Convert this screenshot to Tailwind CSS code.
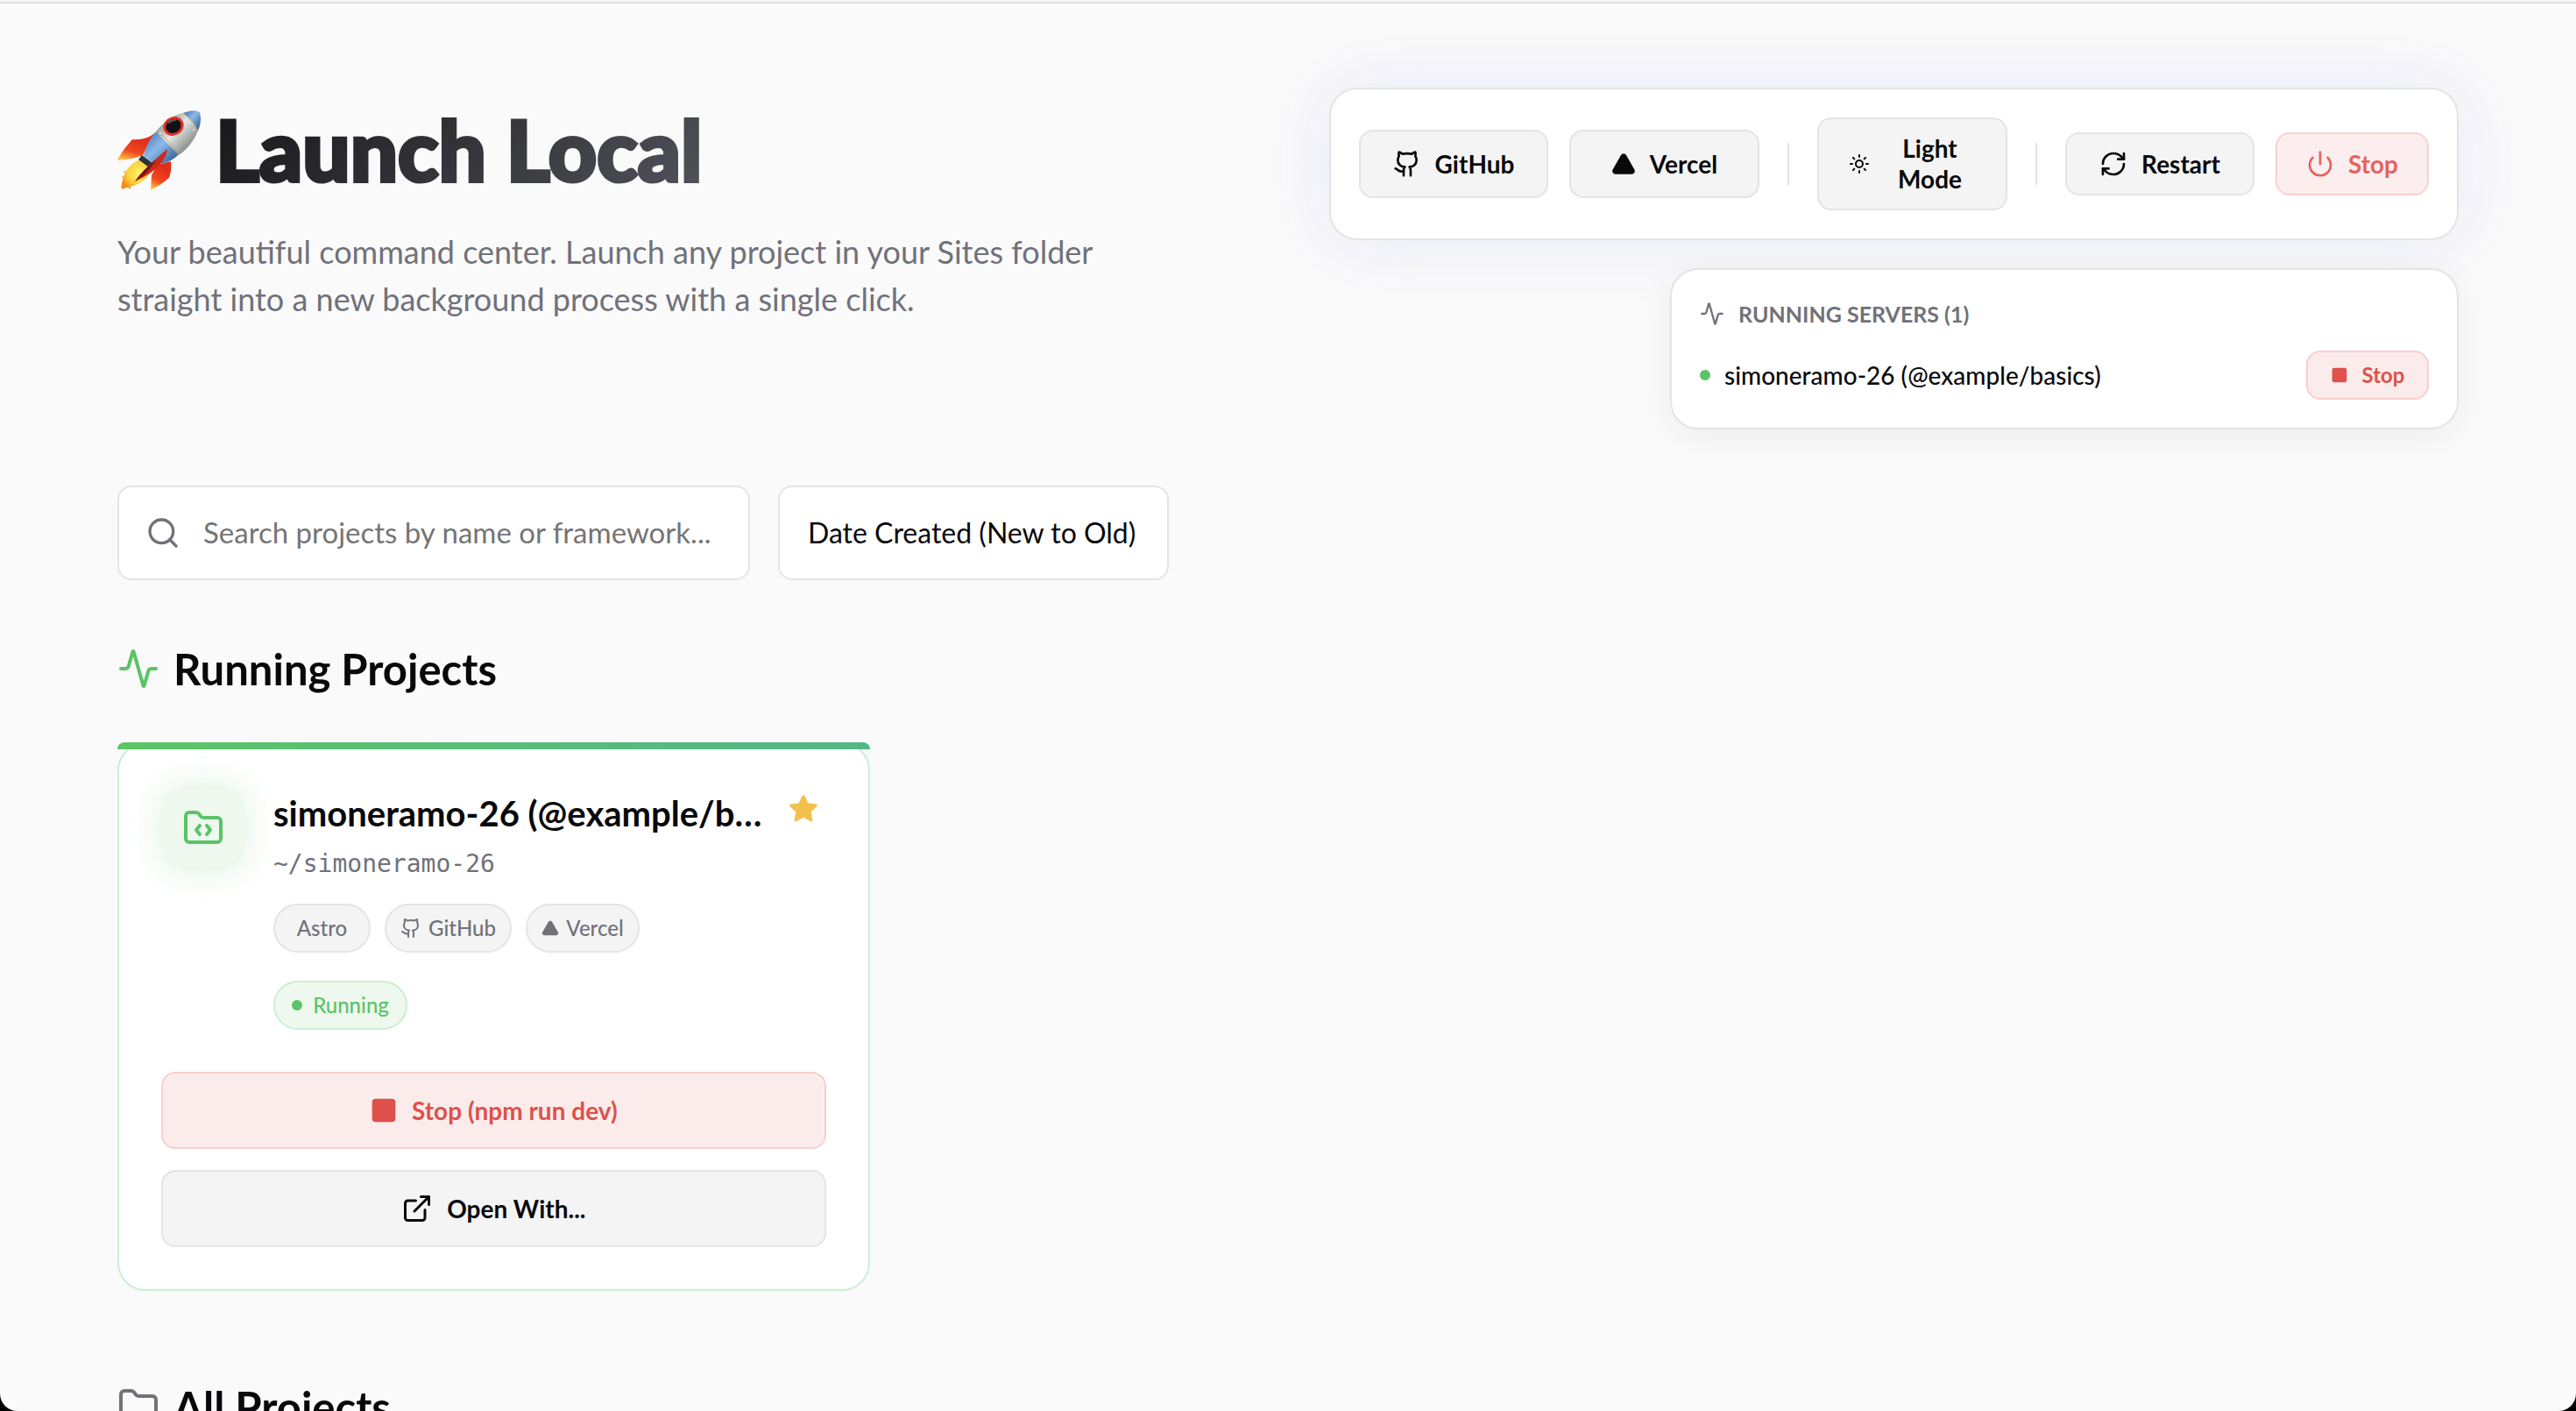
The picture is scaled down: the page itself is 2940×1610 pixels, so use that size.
<!DOCTYPE html>
<html lang="en">
<head>
    <meta charset="UTF-8">
    <meta name="viewport" content="width=device-width, initial-scale=1.0">
    <title>Launch Local</title>
    <script src="https://cdn.jsdelivr.net/npm/@tailwindcss/browser@4"></script>
</head>
<body class="bg-black font-['Lato','Noto_Sans',sans-serif] text-[#09090b]">

<!-- Icon sprites -->
<svg class="hidden" aria-hidden="true">
    <symbol id="i-github" viewBox="0 0 24 24" fill="none" stroke="currentColor" stroke-width="2" stroke-linecap="round" stroke-linejoin="round">
        <path d="M15 22v-4a4.8 4.8 0 0 0-1-3.5c3 0 6-2 6-5.5.08-1.25-.27-2.48-1-3.5.28-1.15.28-2.35 0-3.5 0 0-1 0-3 1.5-2.64-.5-5.36-.5-8 0C6 2 5 2 5 2c-.3 1.15-.3 2.35 0 3.5A5.403 5.403 0 0 0 4 9c0 3.5 3 5.5 6 5.5-.39.49-.68 1.05-.85 1.65-.17.6-.22 1.23-.15 1.85v4"/>
        <path d="M9 18c-4.51 2-5-2-7-2"/>
    </symbol>
    <symbol id="i-triangle" viewBox="0 0 24 24" fill="currentColor" stroke="currentColor" stroke-width="2" stroke-linecap="round" stroke-linejoin="round">
        <path d="M13.73 4a2 2 0 0 0-3.46 0l-8 14A2 2 0 0 0 4 21h16a2 2 0 0 0 1.73-3Z"/>
    </symbol>
    <symbol id="i-sun" viewBox="0 0 24 24" fill="none" stroke="currentColor" stroke-width="2" stroke-linecap="round" stroke-linejoin="round">
        <circle cx="12" cy="12" r="4"/>
        <path d="M12 2v2M12 20v2M4.93 4.93l1.41 1.41M17.66 17.66l1.41 1.41M2 12h2M20 12h2M6.34 17.66l-1.41 1.41M19.07 4.93l-1.41 1.41"/>
    </symbol>
    <symbol id="i-refresh" viewBox="0 0 24 24" fill="none" stroke="currentColor" stroke-width="2" stroke-linecap="round" stroke-linejoin="round">
        <path d="M3 12a9 9 0 0 1 9-9 9.75 9.75 0 0 1 6.74 2.74L21 8"/>
        <path d="M21 3v5h-5"/>
        <path d="M21 12a9 9 0 0 1-9 9 9.75 9.75 0 0 1-6.74-2.74L3 16"/>
        <path d="M8 16H3v5"/>
    </symbol>
    <symbol id="i-power" viewBox="0 0 24 24" fill="none" stroke="currentColor" stroke-width="2" stroke-linecap="round" stroke-linejoin="round">
        <path d="M12 2v10"/>
        <path d="M18.4 6.6a9 9 0 1 1-12.77.04"/>
    </symbol>
    <symbol id="i-activity" viewBox="0 0 24 24" fill="none" stroke="currentColor" stroke-width="2" stroke-linecap="round" stroke-linejoin="round">
        <path d="M22 12h-2.48a2 2 0 0 0-1.93 1.46l-2.35 8.36a.25.25 0 0 1-.48 0L9.24 2.18a.25.25 0 0 0-.48 0l-2.35 8.36A2 2 0 0 1 4.49 12H2"/>
    </symbol>
    <symbol id="i-square" viewBox="0 0 24 24" fill="currentColor" stroke="currentColor" stroke-width="2">
        <rect x="3" y="3" width="18" height="18" rx="2"/>
    </symbol>
    <symbol id="i-search" viewBox="0 0 24 24" fill="none" stroke="currentColor" stroke-width="2" stroke-linecap="round" stroke-linejoin="round">
        <circle cx="11" cy="11" r="8"/>
        <path d="m21 21-4.34-4.34"/>
    </symbol>
    <symbol id="i-folder" viewBox="0 0 24 24" fill="none" stroke="currentColor" stroke-width="2" stroke-linecap="round" stroke-linejoin="round">
        <path d="M20 20a2 2 0 0 0 2-2V8a2 2 0 0 0-2-2h-7.9a2 2 0 0 1-1.69-.9L9.6 3.9A2 2 0 0 0 7.93 3H4a2 2 0 0 0-2 2v13a2 2 0 0 0 2 2Z"/>
    </symbol>
    <symbol id="i-folder-code" viewBox="0 0 24 24" fill="none" stroke="currentColor" stroke-width="2" stroke-linecap="round" stroke-linejoin="round">
        <path d="M10 10.5 8 13l2 2.5"/>
        <path d="m14 10.5 2 2.5-2 2.5"/>
        <path d="M20 20a2 2 0 0 0 2-2V8a2 2 0 0 0-2-2h-7.9a2 2 0 0 1-1.69-.9L9.6 3.9A2 2 0 0 0 7.93 3H4a2 2 0 0 0-2 2v13a2 2 0 0 0 2 2Z"/>
    </symbol>
    <symbol id="i-star" viewBox="0 0 24 24" fill="currentColor" stroke="currentColor" stroke-width="2" stroke-linecap="round" stroke-linejoin="round">
        <path d="M12 2.5l2.9 6 6.6.9-4.8 4.6 1.2 6.6L12 17.5l-5.9 3.1 1.2-6.600L2.5 9.4l6.600-.9Z"/>
    </symbol>
    <symbol id="i-external" viewBox="0 0 24 24" fill="none" stroke="currentColor" stroke-width="2" stroke-linecap="round" stroke-linejoin="round">
        <path d="M15 3h6v6"/>
        <path d="M10 14 21 3"/>
        <path d="M18 13v6a2 2 0 0 1-2 2H5a2 2 0 0 1-2-2V8a2 2 0 0 1 2-2h6"/>
    </symbol>
</svg>

<div class="h-screen overflow-hidden rounded-b-[20px] bg-[#fafafa]">
<div class="h-1 border-b-2 border-[#e0dfe0] bg-[#faf5f7]"></div>
<div class="px-[134px] pt-24">

    <header class="flex items-start justify-between gap-12">
        <div class="max-w-[1200px] flex-1 pt-5">
            <h1 class="flex h-[104px] items-center gap-4 text-[96px] leading-[100px] font-black">
                <svg class="h-24 w-24" viewBox="0 0 96 92" aria-hidden="true">
                    <defs>
                        <linearGradient id="hull" x1="0" y1="0" x2="1" y2="1">
                            <stop offset="0.15" stop-color="#8f9694"/>
                            <stop offset="0.45" stop-color="#e3e6e2"/>
                            <stop offset="0.9" stop-color="#6d7270"/>
                        </linearGradient>
                        <linearGradient id="blue" x1="0" y1="0" x2="1" y2="1">
                            <stop offset="0" stop-color="#3c6cab"/>
                            <stop offset="0.45" stop-color="#8db9ea"/>
                            <stop offset="1" stop-color="#244b86"/>
                        </linearGradient>
                        <linearGradient id="fin" x1="0.6" y1="0" x2="0.2" y2="1">
                            <stop offset="0.2" stop-color="#df2f1c"/>
                            <stop offset="0.65" stop-color="#f0481f"/>
                            <stop offset="1" stop-color="#fbc53c"/>
                        </linearGradient>
                        <radialGradient id="flame" cx="0.55" cy="0.45" r="0.6">
                            <stop offset="0" stop-color="#fff36b"/>
                            <stop offset="0.6" stop-color="#fbd33b"/>
                            <stop offset="1" stop-color="#f08a1d"/>
                        </radialGradient>
                    </defs>
                    <path d="M26 56C16 60 9 68 7 76c-2 6-3 11-2 14 7-3 17-4 25-10 6-5 10-11 12-18Z" fill="url(#flame)"/>
                    <path d="M42 26C37 31 27 34 17 33 11 40 4 48 0 57c10-1 20-2 29-6Z" fill="url(#fin)"/>
                    <path d="M61 58c1 7 0 13-2 19-6 5-14 10-21 14l1-17 6-12Z" fill="url(#fin)"/>
                    <path d="M44 24c-7 8-12 18-14 28l12 9c11 0 21-3 28-11Z" fill="url(#blue)"/>
                    <path d="M44 24C52 14 63 5 75 3c8 4 14 12 17 20-4 11-12 21-22 28Z" fill="url(#hull)"/>
                    <path d="M75 3C82 0 89-1 94 2c2 7 1 14-2 21C88 14 82 8 75 3Z" fill="url(#blue)"/>
                    <path d="M44 24c10 6 19 15 26 27M75 3c7 5 13 12 17 20" fill="none" stroke="#b39b45" stroke-width="0.8"/>
                    <path d="m28 51 12 9-4 5-12-9Z" fill="#2b323b"/>
                    <path d="M57 44c-10 9-26 21-37 37 14-6 26-15 32-24 3-5 5-9 5-13Z" fill="#c82a1c"/>
                    <path d="M44 56c-8 7-17 15-24 25 8-5 18-13 24-25Z" fill="#701414"/>
                    <ellipse cx="64" cy="18" rx="12" ry="10.5" fill="#de3026" transform="rotate(-30 64 18)"/>
                    <ellipse cx="64" cy="18" rx="9" ry="7.5" fill="#101114" transform="rotate(-30 64 18)"/>
                    <path d="M59 14c2-2 5-3 7-3" fill="none" stroke="#555b60" stroke-width="2" stroke-linecap="round"/>
                    <g fill="#e8edef">
                        <circle cx="49" cy="26" r="1"/><circle cx="59" cy="34" r="1"/><circle cx="82" cy="14" r="1"/><circle cx="87" cy="22" r="1"/>
                    </g>
                    <g fill="#f4a63a">
                        <circle cx="8" cy="70" r="1"/><circle cx="6" cy="76" r="1"/><circle cx="14" cy="88" r="1.5"/>
                    </g>
                </svg>
                <span class="bg-linear-135 from-[#18181b] to-[#52525b] bg-clip-text pb-1 text-transparent [-webkit-text-stroke:4px_transparent]">Launch Local</span>
            </h1>
            <p class="mt-9 text-[36px] leading-[54px] text-[#71717a]">Your beautiful command center. Launch any project in your Sites folder straight into a new background process with a single click.</p>
        </div>

        <div class="flex flex-col items-end gap-8">
            <nav class="flex items-center gap-6 rounded-[32px] border-2 border-[#e4e4e5] bg-white p-8 text-[28px] font-bold shadow-[0_0_80px_rgba(99,102,241,0.12)]">
                <a href="#" class="flex h-[78px] w-[216px] items-center justify-center gap-4 rounded-2xl border-2 border-[#e4e4e5] bg-[#f4f4f4]"><svg class="size-8"><use href="#i-github"/></svg>GitHub</a>
                <a href="#" class="flex h-[78px] w-[217px] items-center justify-center gap-4 rounded-2xl border-2 border-[#e4e4e5] bg-[#f4f4f4]"><svg class="size-7"><use href="#i-triangle"/></svg>Vercel</a>
                <span class="mx-2 h-12 w-[2px] bg-[#e4e4e5]"></span>
                <button class="flex h-[106px] w-[217px] items-center justify-center gap-8 rounded-2xl border-2 border-[#e4e4e5] bg-[#f4f4f4] pr-4 leading-[35px]"><svg class="size-6"><use href="#i-sun"/></svg><span>Light<br>Mode</span></button>
                <span class="mx-2 h-12 w-[2px] bg-[#e4e4e5]"></span>
                <button class="flex h-[72px] w-[216px] items-center justify-center gap-4 rounded-2xl border-2 border-[#e4e4e5] bg-[#f4f4f4]"><svg class="size-8"><use href="#i-refresh"/></svg>Restart</button>
                <button class="flex h-[72px] w-[175px] items-center justify-center gap-4 rounded-2xl border-2 border-[#f9d0d0] bg-[#fceeee] text-[#e4635e]"><svg class="size-8"><use href="#i-power"/></svg>Stop</button>
            </nav>

            <section class="w-[900px] rounded-[32px] border-2 border-[#e4e4e5] bg-white p-8 shadow-[0_8px_40px_rgba(0,0,0,0.06)]">
                <h2 class="flex items-center gap-4 text-[25px] leading-9 font-bold text-[#71717a]"><svg class="size-7"><use href="#i-activity"/></svg>RUNNING SERVERS (1)</h2>
                <div class="mt-6 flex items-center gap-4 text-[28px] font-medium">
                    <span class="size-3 rounded-full bg-[#5ac466]"></span>
                    <span class="flex-1">simoneramo-26 (@example/basics)</span>
                    <button class="flex h-14 w-[140px] items-center justify-center gap-4 rounded-2xl border-2 border-[#f7cfce] bg-[#fbeceb] text-[24px] font-bold text-[#de514c]"><svg class="size-5"><use href="#i-square"/></svg>Stop</button>
                </div>
            </section>
        </div>
    </header>

    <div class="mt-16 flex gap-8">
        <label class="flex h-[108px] w-[722px] items-center gap-[26px] rounded-2xl border-2 border-[#e4e4e5] bg-white pr-4 pl-[30px] text-[33px]">
            <svg class="size-10 shrink-0 text-[#71717a]"><use href="#i-search"/></svg>
            <input type="text" aria-label="Search projects" placeholder="Search projects by name or framework..." class="min-w-0 flex-1 outline-none placeholder:text-[#757575]">
        </label>
        <select aria-label="Sort projects" class="h-[108px] w-[446px] appearance-none rounded-2xl border-2 border-[#e4e4e5] bg-white px-8 text-[32px]">
            <option>Date Created (New to Old)</option>
        </select>
    </div>

    <h2 class="mt-[71px] flex items-center gap-4 text-[49px] leading-[60px] font-bold"><svg class="size-12 text-[#5ac466]"><use href="#i-activity"/></svg>Running Projects</h2>

    <main class="mt-[54px] grid grid-cols-3 gap-12">
        <article class="relative rounded-[32px] border-2 border-[#cdeed1] bg-white p-12">
            <div class="absolute -inset-x-[2px] -top-[2px] h-2 rounded-t-lg bg-linear-to-r from-[#5ac466] to-[#53b787]"></div>
            <div class="flex gap-8">
                <div class="flex size-24 shrink-0 items-center justify-center rounded-[28px] bg-[#eef8ef] text-[#5ac466] shadow-[0_0_40px_rgba(90,196,102,0.2)]"><svg class="size-12"><use href="#i-folder-code"/></svg></div>
                <div class="min-w-0 flex-1">
                    <div class="flex items-start gap-4">
                        <h3 class="min-w-0 flex-1 truncate text-[40px] leading-[62px] font-bold">simoneramo-26 (@example/basics)</h3>
                        <button aria-label="Favourite" class="p-2 text-[#f3c14b]"><svg class="size-9"><use href="#i-star"/></svg></button>
                    </div>
                    <p class="mt-[6px] font-['DejaVu_Sans_Mono',monospace] text-[28px] leading-[42px] text-[#71717a]">~/simoneramo-26</p>
                    <div class="mt-6 flex gap-4 text-[24px] font-medium text-[#71717a]">
                        <span class="flex h-14 w-[111px] items-center justify-center rounded-full border-2 border-[#e4e4e5] bg-[#f4f4f5]">Astro</span>
                        <a href="#" class="flex h-14 w-[145px] items-center justify-center gap-2 rounded-full border-2 border-[#e4e4e5] bg-[#f4f4f5]"><svg class="size-6"><use href="#i-github"/></svg>GitHub</a>
                        <a href="#" class="flex h-14 w-[130px] items-center justify-center gap-2 rounded-full border-2 border-[#e4e4e5] bg-[#f4f4f5]"><svg class="size-5"><use href="#i-triangle"/></svg>Vercel</a>
                    </div>
                    <div class="mt-8 flex h-14 w-[153px] items-center justify-center gap-3 rounded-full border-2 border-[#cdeed1] bg-[#eef8ef] text-[24px] font-medium text-[#5ac466]"><span class="size-3 rounded-full bg-[#5ac466]"></span>Running</div>
                </div>
            </div>
            <div class="mt-12 flex flex-col gap-6 text-[28px] font-bold">
                <button class="flex h-[88px] items-center justify-center gap-4 rounded-2xl border-2 border-[#f7cfce] bg-[#fbeceb] text-[#de514c]"><svg class="size-8"><use href="#i-square"/></svg>Stop (npm run dev)</button>
                <button class="flex h-[88px] items-center justify-center gap-4 rounded-2xl border-2 border-[#e4e4e5] bg-[#f4f4f4]"><svg class="size-9"><use href="#i-external"/></svg>Open With...</button>
            </div>
        </article>
    </main>

    <h2 class="mt-[102px] flex items-center gap-4 text-[49px] leading-[60px] font-bold"><svg class="size-12 text-[#71717a]"><use href="#i-folder"/></svg>All Projects</h2>
</div>
</div>

</body>
</html>
